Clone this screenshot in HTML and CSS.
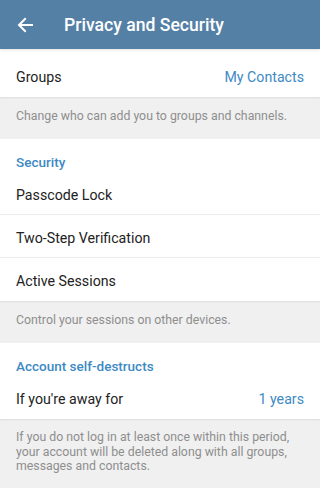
FILE: index.html
```html
<!DOCTYPE html>
<html>
<head>
<meta charset="utf-8">
<link rel="stylesheet" href="styles.css">
</head>
<body>
<div class="app">
  <header class="topbar">
    <svg class="back" width="16" height="16" viewBox="0 0 16 16"><path d="M15 8H2.5M8 2L2 8l6 6" fill="none" stroke="#fff" stroke-width="2" stroke-linecap="square"/></svg>
    <h1 class="title">Privacy and Security</h1>
  </header>
  <section class="card">
    <div class="row row-first"><span class="label">Groups</span><span class="value">My Contacts</span></div>
  </section>
  <div class="info"><p>Change who can add you to groups and channels.</p></div>
  <section class="card">
    <div class="section-title">Security</div>
    <div class="row"><span class="label">Passcode Lock</span></div>
    <div class="divider"></div>
    <div class="row"><span class="label">Two-Step Verification</span></div>
    <div class="divider"></div>
    <div class="row"><span class="label">Active Sessions</span></div>
  </section>
  <div class="info"><p>Control your sessions on other devices.</p></div>
  <section class="card">
    <div class="section-title">Account self-destructs</div>
    <div class="row"><span class="label">If you're away for</span><span class="value">1 years</span></div>
  </section>
  <div class="info info-last"><p>If you do not log in at least once within this period, your account will be deleted along with all groups, messages and contacts.</p></div>
</div>
</body>
</html>
```
FILE: styles.css
```css
* { box-sizing: border-box; }
html, body { margin: 0; padding: 0; }
body { font-family: Roboto, "Noto Sans", sans-serif; background: #f0f0f0; width: 320px; height: 488px; overflow: hidden; }
.app { display: flex; flex-direction: column; }
.topbar { height: 49px; background: #5580a6; display: flex; align-items: center; padding-left: 17px; box-shadow: 0 1px 3px rgba(0,0,0,0.12); position: relative; z-index: 1; }
.back { flex: none; }
.title { margin: 0 0 0 31px; color: #fff; font-size: 17.6px; font-weight: 500; }
.card { background: #fff; display: flex; flex-direction: column; }
.row { height: 43px; display: flex; align-items: center; justify-content: space-between; padding: 2px 16px 0; font-size: 14.2px; color: #222; }
.row-first { height: 48px; padding-top: 7px; }
.value { color: #3d8ac4; }
.divider { height: 1px; background: #ececec; margin-top: -1px; }
.section-title { height: 33px; padding: 15px 16px 0; color: #3d8ac4; font-size: 13.5px; font-weight: 500; }
.info { background: #f0f0f0; padding: 12px 16px 0; height: 42px; box-shadow: inset 0 2px 2px -1px rgba(0,0,0,0.08); }
.info p { margin: 0; font-size: 12.3px; line-height: 14.5px; color: #8e8e8e; }
.info-last { height: auto; padding-top: 11px; }
```
